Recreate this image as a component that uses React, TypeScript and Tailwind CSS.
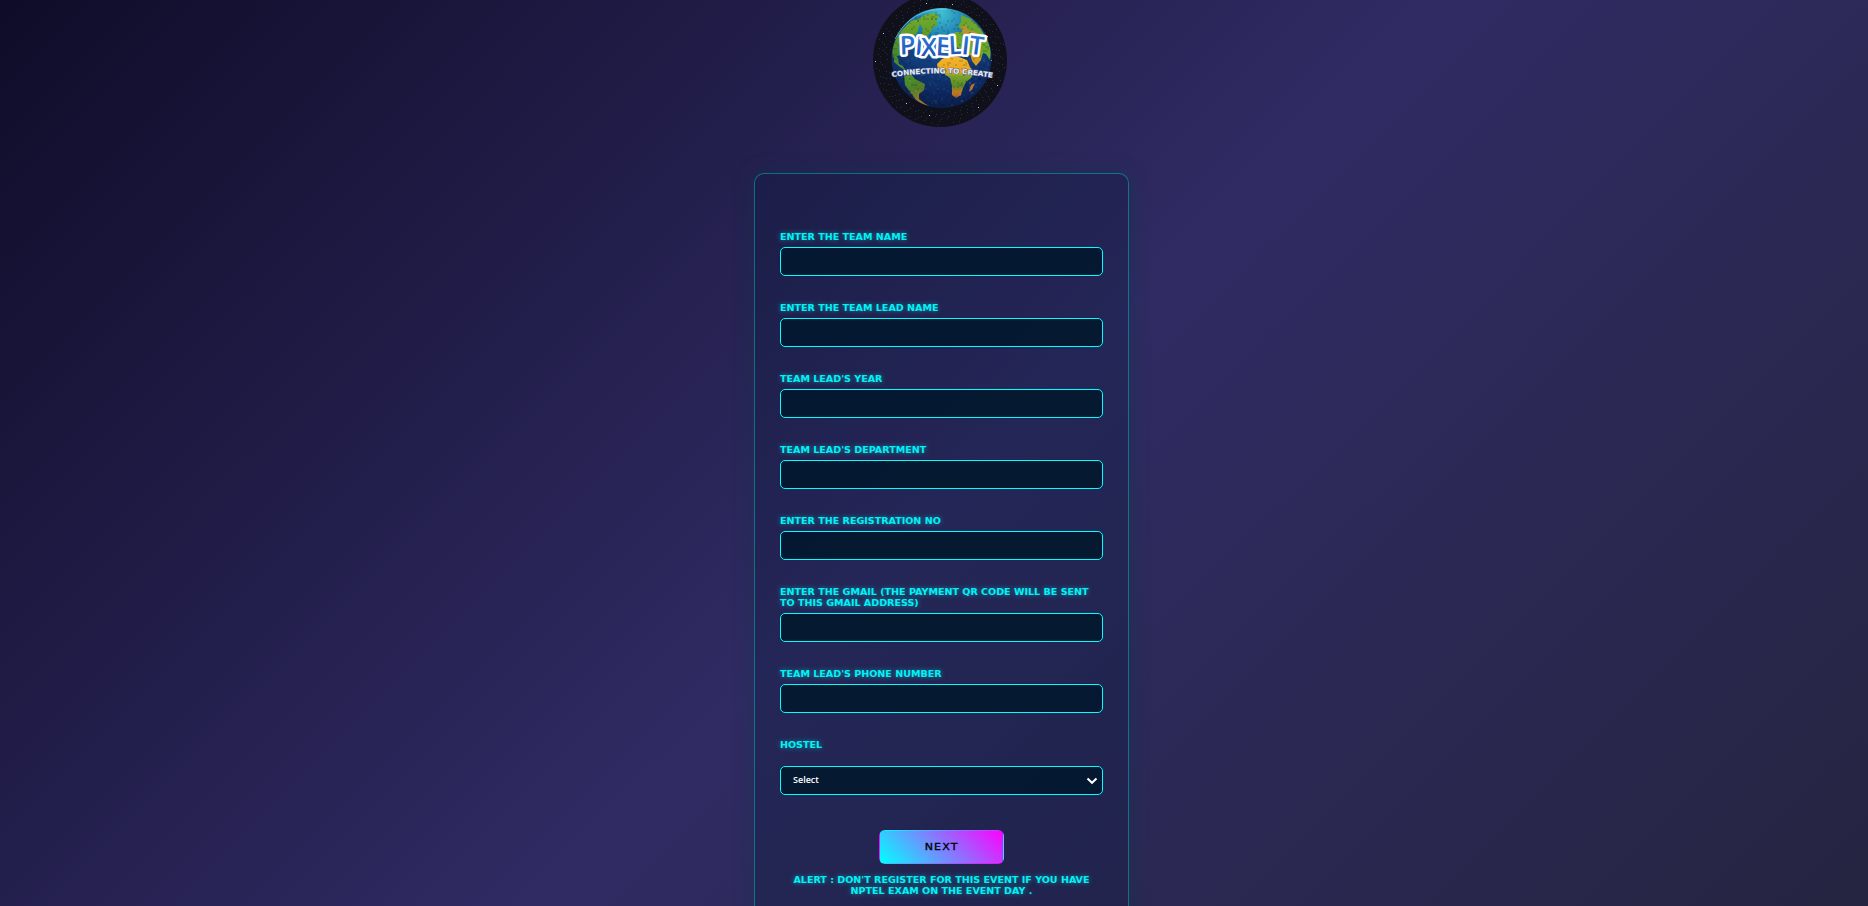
import React from "react";

const fields: string[][] = [
  ["ENTER THE TEAM NAME"],
  ["ENTER THE TEAM LEAD NAME"],
  ["TEAM LEAD'S YEAR"],
  ["TEAM LEAD'S DEPARTMENT"],
  ["ENTER THE REGISTRATION NO"],
  ["ENTER THE GMAIL (THE PAYMENT QR CODE WILL BE SENT", "TO THIS GMAIL ADDRESS)"],
  ["TEAM LEAD'S PHONE NUMBER"],
];

const stars = Array.from({ length: 210 }, (_, i) => {
  const a = i * 2.39996;
  const r = 51 + ((i * 37) % 59) / 4.2;
  return {
    x: Math.round(67 + Math.cos(a) * r),
    y: Math.round(60 + Math.sin(a) * r),
    bright: i % 23 === 0,
  };
});

const noise = (n: number) => {
  const v = Math.sin(n * 127.1 + 11.7) * 43758.5453;
  return v - Math.floor(v);
};

const blocks = Array.from({ length: 620 }, (_, i) => ({
  x: 18 + Math.floor(noise(i) * 50) * 2,
  y: 8 + Math.floor(noise(i + 1000) * 50) * 2,
  light: noise(i + 2000) > 0.6,
}));

function Logo() {
  return (
    <svg width="134" height="127" viewBox="0 0 134 127" className="block">
      <defs>
        <radialGradient id="sea" cx="0.5" cy="0.05" r="1">
          <stop offset="0" stopColor="#3fc0d4" />
          <stop offset="0.25" stopColor="#1f80b0" />
          <stop offset="0.5" stopColor="#123f7d" />
          <stop offset="0.8" stopColor="#0d2860" />
          <stop offset="1" stopColor="#0a1a40" />
        </radialGradient>
        <linearGradient id="land" x1="0" y1="0" x2="0" y2="1">
          <stop offset="0" stopColor="#74ad2c" />
          <stop offset="1" stopColor="#458526" />
        </linearGradient>
        <linearGradient id="south" x1="0" y1="0" x2="0.4" y2="1">
          <stop offset="0" stopColor="#4c9428" />
          <stop offset="0.55" stopColor="#4f7f25" />
          <stop offset="1" stopColor="#a8762a" />
        </linearGradient>
        <linearGradient id="africa" x1="0" y1="0" x2="0" y2="1">
          <stop offset="0" stopColor="#f6b52a" />
          <stop offset="0.38" stopColor="#e8a51c" />
          <stop offset="0.48" stopColor="#78a228" />
          <stop offset="0.72" stopColor="#5a8a26" />
          <stop offset="0.85" stopColor="#c07a20" />
          <stop offset="1" stopColor="#b45f20" />
        </linearGradient>
        <linearGradient id="word" x1="0" y1="0" x2="0" y2="1">
          <stop offset="0" stopColor="#3488e8" />
          <stop offset="1" stopColor="#1b48a8" />
        </linearGradient>
        <clipPath id="globe">
          <circle cx="68.500" cy="58" r="49.500" />
        </clipPath>
      </defs>
      <circle cx="67" cy="60" r="67" fill="#10101b" />
      <g shapeRendering="crispEdges">
        {stars.map((s, i) => (
          <rect
            key={i}
            x={s.x}
            y={s.y}
            width="1"
            height="1"
            fill={s.bright ? "#a8d8e8" : "#1a3346"}
          />
        ))}
      </g>
      <circle cx="68.500" cy="58" r="50" fill="url(#sea)" />
      <g clipPath="url(#globe)">
        <path
          d="M60 13 L52 15 L45 19 L38 21 L33 26 L27 32 L22 41 L19 50 L20 58 L27 55 L30 46 L38 38 L44 33 L47 24 L50 29 L48 35 L53 37 L58 32 L60 27 L65 25 L63 20 L67 16 Z"
          fill="url(#land)"
        />
        <path d="M21 54 L25 58 L26 64 L30 66 L33 71 L27 67 L21 62 Z" fill="#4d8d29" />
        <path
          d="M31 76 L38 74 L42 79 L52 84 L51 90 L46 94 L46 99 L51 103 L56 106 L50 105 L43 100 L37 92 L32 85 Z"
          fill="url(#south)"
        />
        <path
          d="M88 15 L98 19 L107 28 L114 39 L118 50 L117 60 L113 54 L110 53 L108 60 L103 56 L96 55 L90 52 L83 46 L80 37 L82 32 L90 32 L85 26 L88 22 Z"
          fill="#6ba52b"
        />
        <path d="M88 27 L93 25 L95 30 L103 32 L107 42 L104 52 L100 45 L97 36 L90 34 Z" fill="#b8922b" />
        <path d="M97 53 L107 55 L108 60 L103 66 L99 61 Z" fill="#d49a20" />
        <path
          d="M64 64 L69 59 L76 56 L86 57 L94 60 L97 67 L101 72 L98 78 L93 82 L90 88 L88 95 L83 98 L79 95 L79 86 L77 78 L70 73 L65 70 Z"
          fill="url(#africa)"
        />
        <path d="M98 85 L102 83 L99 90 L96 91 Z" fill="#c26b23" />
        <g shapeRendering="crispEdges">
          {blocks.map((b, i) => (
            <rect
              key={i}
              x={b.x}
              y={b.y}
              width="2"
              height="2"
              fill={b.light ? "#70d0f0" : "#041034"}
              opacity={b.light ? 0.08 : 0.14}
            />
          ))}
        </g>
      </g>
      <path d="M22 39 Q38 8 74 9" fill="none" stroke="#8be8e8" strokeOpacity="0.6" />
      <text
        x="27 41.500 48 62.500 76 88 95.500"
        y="54.500 54.500 55.500 55 54.500 54 53.500"
        rotate="-2 5 0 3 -3 6 7"
        fontFamily="'Open Sans', sans-serif"
        fontSize="25.500"
        fontWeight="600"
        fill="url(#word)"
        stroke="#fff"
        strokeWidth="5"
        strokeLinejoin="round"
        paintOrder="stroke"
      >
        PIXELIT
      </text>
      <path id="curve" d="M19 77 Q68 69 121 78" fill="none" />
      <text
        fontFamily="'DejaVu Sans', sans-serif"
        fontWeight="700"
        fontSize="7"
        fill="#e6ecf6"
        stroke="#53628f"
        strokeWidth="1"
        paintOrder="stroke"
      >
        <textPath href="#curve" textLength="101" lengthAdjust="spacingAndGlyphs">
          CONNECTING TO CREATE
        </textPath>
      </text>
    </svg>
  );
}

const labelClass =
  "block font-['DejaVu_Sans',sans-serif] text-[8.8px] leading-[11px] font-bold text-[#00f2f6] [text-shadow:0_0_5px_rgba(0,255,255,0.5)]";

function Lines({ lines, centered = false }: { lines: string[]; centered?: boolean }) {
  return (
    <>
      {lines.map((line) => (
        <span
          key={line}
          className={
            "block scale-x-[1.085] whitespace-nowrap " + (centered ? "origin-center" : "origin-left")
          }
        >
          {line}
        </span>
      ))}
    </>
  );
}

export default function App() {
  return (
    <div className="flex h-[906px] flex-col items-center overflow-hidden bg-[#24243e] bg-[linear-gradient(135deg,#0f0c29,#302b63,#24243e)] bg-[length:100%_1014px] bg-no-repeat pl-[15px]">
      <div className="mr-[4px] h-[127px] w-[134px] shrink-0">
        <Logo />
      </div>
      <form className="mt-[46px] h-[800px] w-[375px] shrink-0 rounded-[10px] border border-[#00ffff]/35 bg-[#0a1c3c]/30 px-[25px] pt-[58px] shadow-[0_0_20px_rgba(10,60,70,0.45)]">
        {fields.map((lines) => (
          <div key={lines[0]} className="mb-[27px]">
            <label className={labelClass}>
              <Lines lines={lines} />
            </label>
            <input className="mt-[4px] block h-[29px] w-full rounded-[5px] border border-[#00ffff] bg-[#04182f]/95 outline-none" />
          </div>
        ))}
        <label className={labelClass}>
          <Lines lines={["HOSTEL"]} />
        </label>
        <div className="mt-[15px] flex h-[29px] items-center justify-between rounded-[5px] border border-[#00ffff] bg-[#04182f]/95 pr-[4px] pl-[12px] font-['Open_Sans',sans-serif] text-[9px] font-semibold text-white">
          <span className="-mt-[2px]">Select</span>
          <svg width="12" height="8" viewBox="0 0 12 8" fill="none">
            <path d="M1.500 1.500 6 5.800 10.500 1.500" stroke="#fff" strokeWidth="2" />
          </svg>
        </div>
        <button
          type="button"
          className="mx-auto mt-[35px] block h-[34px] w-[125px] rounded-[6px] border border-transparent bg-[linear-gradient(45deg,#00ffff,#ff00ff)] font-['DejaVu_Sans',sans-serif] text-[9.5px] tracking-[1px] text-black"
        >
          <span className="inline-block scale-x-[1.16] [-webkit-text-stroke:0.3px_#000]">NEXT</span>
        </button>
        <p className={labelClass + " mt-[11px] text-center"}>
          <Lines
            centered
            lines={["ALERT : DON'T REGISTER FOR THIS EVENT IF YOU HAVE", "NPTEL EXAM ON THE EVENT DAY ."]}
          />
        </p>
      </form>
    </div>
  );
}
